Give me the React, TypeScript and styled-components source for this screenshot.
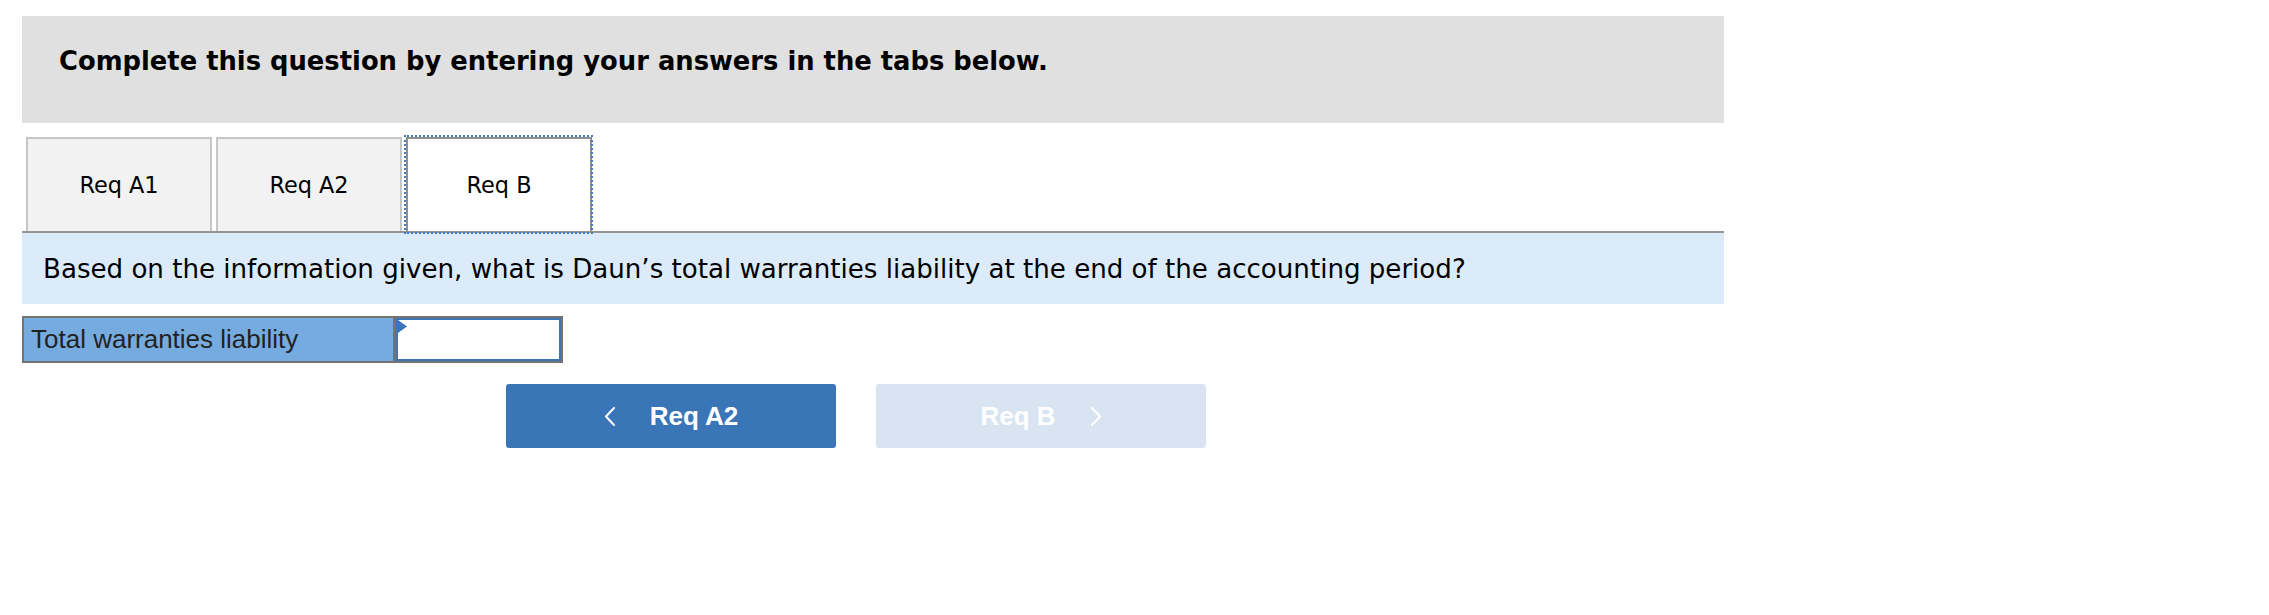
import React from 'react'
import styled, { createGlobalStyle, css } from 'styled-components'

const GlobalStyle = createGlobalStyle`
  html, body {
    margin: 0;
    padding: 0;
    background: #fff;
  }
`

const Page = styled.div`
  padding: 16px 0 0 22px;
  width: 1702px;
`

const Instructions = styled.div`
  background: #e0e0e0;
  padding: 30px 0 47px 37px;
  font-family: "DejaVu Sans", Verdana, sans-serif;
  font-weight: bold;
  font-size: 25.8px;
  line-height: 30px;
  color: #000;
`

const TabBar = styled.div`
  display: flex;
  gap: 4px;
  margin-top: 14px;
  padding-left: 4px;
  border-bottom: 2px solid #979592;
`

const Tab = styled.div<{ $active?: boolean }>`
  position: relative;
  width: 186px;
  height: 94px;
  box-sizing: border-box;
  display: flex;
  align-items: center;
  justify-content: center;
  font-family: "DejaVu Sans", Verdana, sans-serif;
  font-size: 22.4px;
  color: #000;
  background: ${p => (p.$active ? '#fff' : '#f2f2f2')};
  border: 2px solid ${p => (p.$active ? '#8f8f8f' : '#c6c6c6')};
  border-bottom: none;
  ${p =>
    p.$active &&
    css`
      &::after {
        content: '';
        position: absolute;
        top: -4px;
        left: -4px;
        right: -3px;
        bottom: -3px;
        border: 2px dotted #3b7cc4;
        pointer-events: none;
      }
    `}
`

const Question = styled.div`
  background: #dbebf9;
  height: 71px;
  padding-left: 21px;
  display: flex;
  align-items: center;
  font-family: "DejaVu Sans", Verdana, sans-serif;
  font-size: 26.1px;
  color: #000;
`

const AnswerRow = styled.div`
  display: flex;
  width: 541px;
  height: 47px;
  margin-top: 12px;
  box-sizing: border-box;
  border: 2px solid #737373;
  background: #737373;
  gap: 3px;
`

const AnswerLabel = styled.div`
  width: 369px;
  background: #76abe0;
  display: flex;
  align-items: center;
  padding-left: 7px;
  box-sizing: border-box;
  font-family: "Liberation Sans", Arial, sans-serif;
  font-size: 26px;
  color: #222;
`

const AnswerCell = styled.div`
  position: relative;
  flex: 1;
  background: #fff;
  border: 2px solid #3a75b5;
`

const Flag = styled.svg`
  position: absolute;
  left: 0;
  top: 0;
`

const Nav = styled.div`
  display: flex;
  gap: 40px;
  margin-top: 21px;
  padding-left: 484px;
`

const NavButton = styled.button<{ $disabled?: boolean }>`
  width: 330px;
  height: 64px;
  border: none;
  border-radius: 3px;
  background: ${p => (p.$disabled ? '#d8e4f1' : '#3a76b7')};
  color: #fff;
  display: flex;
  align-items: center;
  justify-content: center;
  gap: 35px;
  font-family: "Liberation Sans", Arial, sans-serif;
  font-weight: bold;
  font-size: 26px;
  padding: 0;
`

const Chevron = ({ dir }: { dir: 'left' | 'right' }) => (
  <svg width="11" height="19" viewBox="0 0 11 19" fill="none">
    <polyline
      points={dir === 'left' ? '10,1 2,9.5 10,18' : '1,1 9,9.5 1,18'}
      stroke="#fff"
      strokeWidth="2"
      strokeLinecap="round"
      strokeLinejoin="round"
    />
  </svg>
)

export default function App() {
  return (
    <>
      <GlobalStyle />
      <Page>
        <Instructions>Complete this question by entering your answers in the tabs below.</Instructions>
        <TabBar>
          <Tab>Req A1</Tab>
          <Tab>Req A2</Tab>
          <Tab $active>Req B</Tab>
        </TabBar>
        <Question>
          Based on the information given, what is Daun’s total warranties liability at the end of the accounting period?
        </Question>
        <AnswerRow>
          <AnswerLabel>Total warranties liability</AnswerLabel>
          <AnswerCell>
            <Flag width="10" height="14" viewBox="0 0 10 14">
              <polygon points="0,0 9,6.5 0,13" fill="#3a75b5" />
            </Flag>
          </AnswerCell>
        </AnswerRow>
        <Nav>
          <NavButton>
            <Chevron dir="left" />
            <span>Req A2</span>
          </NavButton>
          <NavButton $disabled>
            <span>Req B</span>
            <Chevron dir="right" />
          </NavButton>
        </Nav>
      </Page>
    </>
  )
}
